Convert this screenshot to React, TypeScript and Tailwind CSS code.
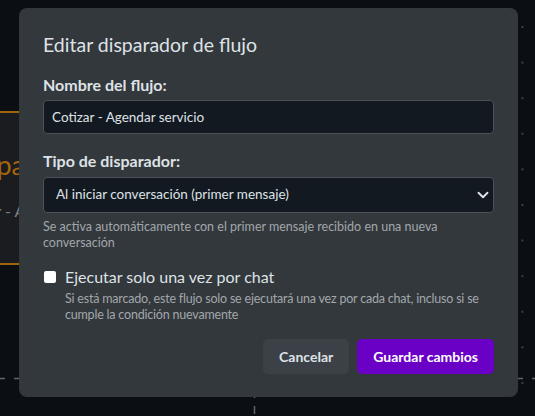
import React from "react";

export default function App() {
  return (
    <div className="relative w-[535px] h-[416px] overflow-hidden bg-[#0b0e12] bg-[radial-gradient(circle,#3b4046_0.9px,transparent_1.3px)] bg-[length:35.6px_35.6px] bg-[position:6.3px_9.2px] font-['Lato',sans-serif]">
      {/* flow canvas behind the dialog */}
      <div className="absolute left-[-200px] top-[111px] w-[400px] h-[154px] border-y-2 border-[#a0620b] bg-[#1a1c1f]">
        <div className="pl-[160px] pt-[36px] text-[27px] leading-[32px] text-[#a5650c] whitespace-nowrap">
          <span className="ml-[-2px]">Disparador</span>
        </div>
        <div className="pl-[160px] pt-[18px] text-[16px] leading-[24px] text-[#7d8084] whitespace-nowrap">
          <span className="ml-[-9px]">Cotizar - Agendar servicio</span>
        </div>
      </div>
      <svg className="absolute inset-0" width="535" height="416" viewBox="0 0 535 416" fill="none">
        <path d="M0 378.5H535" stroke="#5f6469" strokeWidth="1.5" strokeDasharray="5 9" />
        <path d="M254.5 390V416" stroke="#5f6469" strokeWidth="1.5" strokeDasharray="8 8" />
      </svg>

      {/* dialog */}
      <div className="absolute left-[19px] top-[8px] w-[499px] rounded-[8px] bg-[#33383c] px-[24px] pt-[24.5px] pb-[23px] text-[#dee2e6]">
        <h5 className="text-[19.5px] leading-[24px] font-normal mb-[16px]">Editar disparador de flujo</h5>

        <label className="block text-[16px] leading-[24px] font-bold mb-[3px]">Nombre del flujo:</label>
        <input
          readOnly
          value="Cotizar - Agendar servicio"
          className="block w-full h-[34px] rounded-[4px] border border-[#4b5157] bg-[#131920] px-[8px] text-[13.5px] text-[#dee2e6] outline-none mb-[15px]"
        />

        <label className="block text-[16px] leading-[24px] font-bold mb-[4px]">Tipo de disparador:</label>
        <div className="relative">
          <select className="block w-full h-[36px] appearance-none rounded-[4px] border border-[#4b5157] bg-[#131920] pl-[12px] pr-[36px] text-[13.5px] text-[#dee2e6] outline-none">
            <option>Al iniciar conversación (primer mensaje)</option>
          </select>
          <svg className="pointer-events-none absolute right-[3px] top-[12px]" width="16" height="12" viewBox="0 0 16 16" fill="none">
            <path d="m2 5 6 6 6-6" stroke="#dee2e6" strokeWidth="2.5" strokeLinecap="round" strokeLinejoin="round" />
          </svg>
        </div>
        <p className="mt-[6px] text-[12.5px] leading-[16px] text-[#a2a7ab]">
          Se activa automáticamente con el primer mensaje recibido en una nueva conversación
        </p>

        <div className="mt-[14px] flex items-center gap-[9px] pl-[1px]">
          <input type="checkbox" className="appearance-none w-[12px] h-[12px] rounded-[2px] bg-white shrink-0" />
          <span className="text-[16px] leading-[24px]">Ejecutar solo una vez por chat</span>
        </div>
        <p className="mt-[2px] pl-[22px] text-[12.5px] leading-[16px] tracking-[-0.2px] text-[#a2a7ab]">
          Si está marcado, este flujo solo se ejecutará una vez por cada chat, incluso si se cumple la condición nuevamente
        </p>

        <div className="mt-[16px] flex justify-end gap-[8px]">
          <button className="h-[35px] px-[16px] rounded-[5px] bg-[#3c4148] text-[14px] font-bold text-[#dee2e6]">Cancelar</button>
          <button className="h-[35px] px-[16px] rounded-[5px] bg-[#6a00c6] text-[14px] font-bold text-white">Guardar cambios</button>
        </div>
      </div>
    </div>
  );
}
